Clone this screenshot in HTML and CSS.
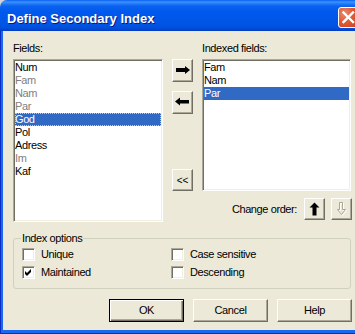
FILE: index.html
```html
<!DOCTYPE html>
<html lang="en">
<head>
  <meta charset="UTF-8">
  <title>Define Secondary Index</title>
  <link rel="stylesheet" href="styles.css">
</head>
<body>
  <div class="window">
    <!-- Title bar -->
    <div class="titlebar">
      <span class="title">Define Secondary Index</span>
      <span class="close">
        <svg width="21" height="21" viewBox="0 0 21 21"><path d="M5.5 5.5 L15 15 M15 5.5 L5.5 15" stroke="#fff" stroke-width="2.4" stroke-linecap="square"/></svg>
      </span>
    </div>

    <div class="frame">
      <div class="client">
        <div class="top">
          <!-- Available fields -->
          <div class="col-left">
            <div class="label">Fields:</div>
            <ul class="listbox fields">
              <li>Num</li>
              <li class="dim">Fam</li>
              <li class="dim">Nam</li>
              <li class="dim">Par</li>
              <li class="sel focus">God</li>
              <li>Pol</li>
              <li>Adress</li>
              <li class="dim">Im</li>
              <li>Kaf</li>
            </ul>
          </div>

          <!-- Move buttons -->
          <div class="col-mid">
            <button class="tool add">
              <svg width="21" height="23" viewBox="0 0 21 23"><path d="M4 9 H13 V7 L18 11 L13 15 V13 H4 Z" fill="#000"/></svg>
            </button>
            <button class="tool remove">
              <svg width="21" height="23" viewBox="0 0 21 23"><path d="M17 9 H8 V6.5 L3 10.5 L8 14.5 V12.5 H17 Z" fill="#000"/></svg>
            </button>
            <button class="tool clear">&lt;&lt;</button>
          </div>

          <!-- Indexed fields -->
          <div class="col-right">
            <div class="label">Indexed fields:</div>
            <ul class="listbox indexed">
              <li>Fam</li>
              <li>Nam</li>
              <li class="sel">Par</li>
            </ul>
            <div class="order">
              <span>Change order:</span>
              <button class="tool move">
                <svg width="21" height="22" viewBox="0 0 21 22"><path d="M10.5 4.5 L15.5 9.5 H12.5 V17.5 H8.5 V9.5 H5.5 Z" fill="#000"/></svg>
              </button>
              <button class="tool move" disabled>
                <svg width="21" height="22" viewBox="0 0 21 22">
                  <path d="M9.5 5.5 H12.5 V12.5 H15.5 L11.5 17.5 L7.5 12.5 H9.5 Z" fill="none" stroke="#fff" stroke-width="1"/>
                  <path d="M8.5 4.5 H11.5 V11.5 H14.5 L10.5 16.5 L6.5 11.5 H8.5 Z" fill="none" stroke="#ACA899" stroke-width="1"/>
                </svg>
              </button>
            </div>
          </div>
        </div>

        <!-- Index options -->
        <fieldset class="options">
          <legend>Index options</legend>
          <div class="checks">
            <label class="check"><span class="box"></span>Unique</label>
            <label class="check"><span class="box"></span>Case sensitive</label>
            <label class="check"><span class="box"><svg width="9" height="9" viewBox="0 0 9 9"><path d="M1 3 L3 5 L7 1 V4 L3 8 L1 6 Z" fill="#000"/></svg></span>Maintained</label>
            <label class="check"><span class="box"></span>Descending</label>
          </div>
        </fieldset>

        <!-- Dialog buttons -->
        <div class="actions">
          <button class="btn default">OK</button>
          <button class="btn">Cancel</button>
          <button class="btn">Help</button>
        </div>
      </div>
    </div>
  </div>
</body>
</html>
```

FILE: styles.css
```css
body {
  margin: 0;
  background-color: #d6d3ce;
  font-family: "Liberation Sans", Arial, sans-serif;
  font-size: 11px;
  letter-spacing: -0.4px;
  color: #000;
  overflow: hidden;
}

.window {
  width: 355px;
  height: 334px;
}

/* Title bar */
.titlebar {
  height: 31px;
  display: flex;
  align-items: flex-start;
  overflow: hidden;
  border-top-left-radius: 7px;
  background: linear-gradient(to bottom, #0a5cf0 0px, #3d95ff 2px, #2a84fc 3px, #0b62ee 6px, #0058ee 12px, #0055e5 24px, #0050da 28px, #003cc2 31px);
}

.title {
  margin: 11px 0 0 7px;
  font-size: 13px;
  line-height: 16px;
  font-weight: bold;
  letter-spacing: 0;
  color: #fff;
  text-shadow: 1px 1px #0a1883;
}

.close {
  margin: 7px -4px 0 auto;
  width: 21px;
  height: 21px;
  box-sizing: border-box;
  border: 1px solid #fff;
  border-radius: 3px;
  background: radial-gradient(circle at 30% 30%, #ea8a6c 0%, #e05a36 45%, #c4401f 100%);
  display: flex;
  align-items: center;
  justify-content: center;
}

.close svg {
  margin: -1px;
}

/* Window frame */
.frame {
  padding: 0 0 4px 3px;
  background-color: #1a68f0;
  box-shadow: inset 1px 0 #0b2dc0, inset 0 -1px #0b2dc0;
}

.client {
  height: 299px;
  box-sizing: border-box;
  padding: 11px 3px 0 10px;
  background-color: #ece9d8;
}

.top {
  display: flex;
  align-items: flex-start;
}

.label {
  height: 13px;
  line-height: 13px;
  margin-bottom: 4px;
}

/* List boxes */
.listbox {
  list-style: none;
  margin: 0;
  padding: 1px;
  box-sizing: border-box;
  background-color: #fff;
  border: 1px solid;
  border-color: #aca899 #fff #fff #aca899;
  box-shadow: inset 1px 1px #716f64, inset -1px -1px #f1efe2;
}

.listbox li {
  height: 13px;
  line-height: 13px;
  white-space: nowrap;
}

.listbox .dim {
  color: #808080;
}

.listbox .sel {
  background-color: #316ac5;
  color: #fff;
}

.listbox .focus {
  outline: 1px dotted #f0c860;
  outline-offset: -1px;
}

.col-left {
  width: 150px;
}

.fields {
  height: 163px;
}

.col-mid {
  width: 21px;
  margin: 0 9px;
  padding-top: 17px;
  display: flex;
  flex-direction: column;
}

.col-right {
  width: 149px;
}

.indexed {
  height: 132px;
}

/* Small tool buttons */
.tool {
  width: 21px;
  height: 23px;
  padding: 0;
  display: flex;
  align-items: center;
  justify-content: center;
  background-color: #ece9d8;
  border: 1px solid;
  border-color: #fff #716f64 #716f64 #fff;
  box-shadow: inset -1px -1px #aca899;
  font-family: "Liberation Sans", Arial, sans-serif;
  font-size: 10px;
  letter-spacing: 0;
}

.tool svg {
  margin: -1px;
  flex-shrink: 0;
}

.remove {
  margin-top: 9px;
}

.clear {
  margin-top: 55px;
  height: 22px;
}

.order {
  margin: 7px -1px 0 0;
  display: flex;
  align-items: center;
  justify-content: flex-end;
  line-height: 13px;
}

.order span {
  margin-right: 7px;
}

.move {
  height: 22px;
}

.move + .move {
  margin-left: 6px;
}

/* Index options group */
.options {
  margin: 10px 0 0 0;
  width: 338px;
  box-sizing: border-box;
  padding: 3px 8px 9px 8px;
  border: 1px solid #d0d0bf;
  border-radius: 3px;
}

.options legend {
  padding: 0 1px;
  margin-left: -1px;
  line-height: 13px;
}

.checks {
  display: grid;
  grid-template-columns: 149px 1fr;
  row-gap: 5px;
}

.check {
  display: flex;
  align-items: center;
  height: 13px;
  line-height: 13px;
}

.box {
  width: 13px;
  height: 13px;
  box-sizing: border-box;
  margin-right: 6px;
  background-color: #fff;
  border: 1px solid;
  border-color: #aca899 #fff #fff #aca899;
  box-shadow: inset 1px 1px #716f64, inset -1px -1px #f1efe2;
  display: flex;
  align-items: center;
  justify-content: center;
}

.box svg {
  margin: 0 0 0 0;
}

/* Dialog buttons */
.actions {
  margin-top: 10px;
  display: flex;
  justify-content: flex-end;
  gap: 9px;
}

.btn {
  width: 75px;
  height: 23px;
  padding: 0;
  background-color: #ece9d8;
  border: 1px solid;
  border-color: #fff #716f64 #716f64 #fff;
  box-shadow: inset -1px -1px #aca899;
  font-family: "Liberation Sans", Arial, sans-serif;
  font-size: 11px;
  letter-spacing: -0.4px;
  line-height: 13px;
  color: #000;
}

.btn.default {
  border: 1px solid #000;
  box-shadow: inset 1px 1px #fff, inset -1px -1px #716f64, inset -2px -2px #aca899;
}
```
